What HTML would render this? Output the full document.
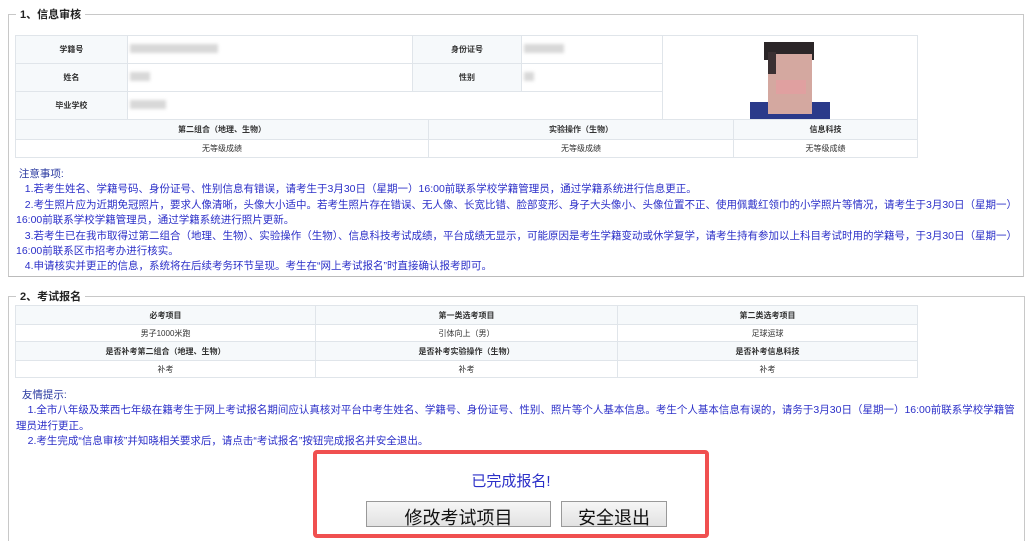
<!DOCTYPE html>
<html style="width:1036px;height:541px;overflow:hidden"><head><meta charset="utf-8"><style>
*{margin:0;padding:0;box-sizing:border-box}
body{width:1036px;height:541px;background:#fff;font-family:"Liberation Sans","Noto Sans CJK SC",sans-serif;position:relative;overflow:hidden}
.fs{position:absolute;border:1px solid #c8c8c8;border-bottom-color:#bbb}
.lg{position:absolute;background:#fff;padding:0 4px;font-weight:bold;font-size:11px;color:#222;line-height:14px}
table{position:absolute;border-collapse:collapse;font-size:8px;color:#333}
td{border:1px solid #e0e5ea;text-align:center;padding:0}
.h{background:#f6f9fb;font-weight:bold}
.v{text-align:left;padding-left:2px}
.blur{display:inline-block;height:9px;background:#d8d8d8;filter:blur(1.5px)}
.txt{position:absolute;font-size:10.5px;line-height:15.4px;color:#2b2fc8;white-space:nowrap}
.txt .t{color:#2a3aa0}
.box{position:absolute;left:313px;top:450px;width:396px;height:88px;border:4px solid #f05050;border-radius:4px;background:#fff}
.btn{position:absolute;border:1px solid #999;background:linear-gradient(#f6f6f6,#e2e2e2);font-size:18px;color:#111;text-align:center;line-height:32px;height:26px;overflow:hidden}
</style></head><body>
<div class="fs" style="left:8px;top:14px;width:1016px;height:263px"></div>
<div class="lg" style="left:16px;top:8px">1、信息审核</div>
<table style="left:15px;top:35px;width:903px">
<tr style="height:28px"><td class="h" style="width:112px">学籍号</td><td class="v" style="width:285px"><span class="blur" style="width:88px"></span></td><td class="h" style="width:110px">身份证号</td><td class="v" style="width:141px"><span class="blur" style="width:40px"></span></td><td rowspan="3" style="width:255px;position:relative">
<svg width="84" height="84" viewBox="0 0 84 84" style="position:absolute;left:87px;top:0px"><rect x="0" y="66" width="80" height="18" fill="#2a3a8a"/><rect x="14" y="6" width="50" height="18" fill="#2b2628"/><rect x="18" y="18" width="44" height="60" fill="#d4a8a0"/><rect x="18" y="16" width="8" height="22" fill="#3a3032"/><rect x="26" y="44" width="30" height="14" fill="#e0a0a0"/></svg></td></tr>
<tr style="height:28px"><td class="h">姓名</td><td class="v"><span class="blur" style="width:20px"></span></td><td class="h">性别</td><td class="v"><span class="blur" style="width:10px"></span></td></tr>
<tr style="height:28px"><td class="h">毕业学校</td><td class="v" colspan="3"><span class="blur" style="width:36px"></span></td></tr>
</table>
<table style="left:15px;top:119px;width:903px">
<tr style="height:20px" class="h"><td style="width:413px">第二组合（地理、生物）</td><td style="width:305px">实验操作（生物）</td><td>信息科技</td></tr>
<tr style="height:18px"><td>无等级成绩</td><td>无等级成绩</td><td>无等级成绩</td></tr>
</table>
<div class="txt" style="left:16px;top:167px"><span class="t">&nbsp;注意事项:</span><br>
&nbsp;&nbsp;&nbsp;1.若考生姓名、学籍号码、身份证号、性别信息有错误，请考生于3月30日（星期一）16:00前联系学校学籍管理员，通过学籍系统进行信息更正。<br>
&nbsp;&nbsp;&nbsp;2.考生照片应为近期免冠照片，要求人像清晰，头像大小适中。若考生照片存在错误、无人像、长宽比错、脸部变形、身子大头像小、头像位置不正、使用佩戴红领巾的小学照片等情况，请考生于3月30日（星期一）<br>
16:00前联系学校学籍管理员，通过学籍系统进行照片更新。<br>
&nbsp;&nbsp;&nbsp;3.若考生已在我市取得过第二组合（地理、生物）、实验操作（生物）、信息科技考试成绩，平台成绩无显示，可能原因是考生学籍变动或休学复学，请考生持有参加以上科目考试时用的学籍号，于3月30日（星期一）<br>
16:00前联系区市招考办进行核实。<br>
&nbsp;&nbsp;&nbsp;4.申请核实并更正的信息，系统将在后续考务环节呈现。考生在“网上考试报名”时直接确认报考即可。</div>
<div class="fs" style="left:8px;top:296px;width:1017px;height:250px"></div>
<div class="lg" style="left:16px;top:290px">2、考试报名</div>
<table style="left:15px;top:305px;width:903px">
<tr style="height:19px" class="h"><td style="width:300px">必考项目</td><td style="width:302px">第一类选考项目</td><td>第二类选考项目</td></tr>
<tr style="height:17px"><td>男子1000米跑</td><td>引体向上（男）</td><td>足球运球</td></tr>
<tr style="height:19px" class="h"><td>是否补考第二组合（地理、生物）</td><td>是否补考实验操作（生物）</td><td>是否补考信息科技</td></tr>
<tr style="height:17px"><td>补考</td><td>补考</td><td>补考</td></tr>
</table>
<div class="txt" style="left:16px;top:388px"><span class="t">&nbsp;&nbsp;友情提示:</span><br>
&nbsp;&nbsp;&nbsp;&nbsp;1.全市八年级及莱西七年级在籍考生于网上考试报名期间应认真核对平台中考生姓名、学籍号、身份证号、性别、照片等个人基本信息。考生个人基本信息有误的，请务于3月30日（星期一）16:00前联系学校学籍管<br>
理员进行更正。<br>
&nbsp;&nbsp;&nbsp;&nbsp;2.考生完成“信息审核”并知晓相关要求后，请点击“考试报名”按钮完成报名并安全退出。</div>
<div class="box"></div>
<div style="position:absolute;left:313px;top:470px;width:396px;text-align:center;font-size:15px;color:#2b2fc8">已完成报名!</div>
<div class="btn" style="left:366px;top:501px;width:185px">修改考试项目</div>
<div class="btn" style="left:561px;top:501px;width:106px">安全退出</div>
</body></html>
